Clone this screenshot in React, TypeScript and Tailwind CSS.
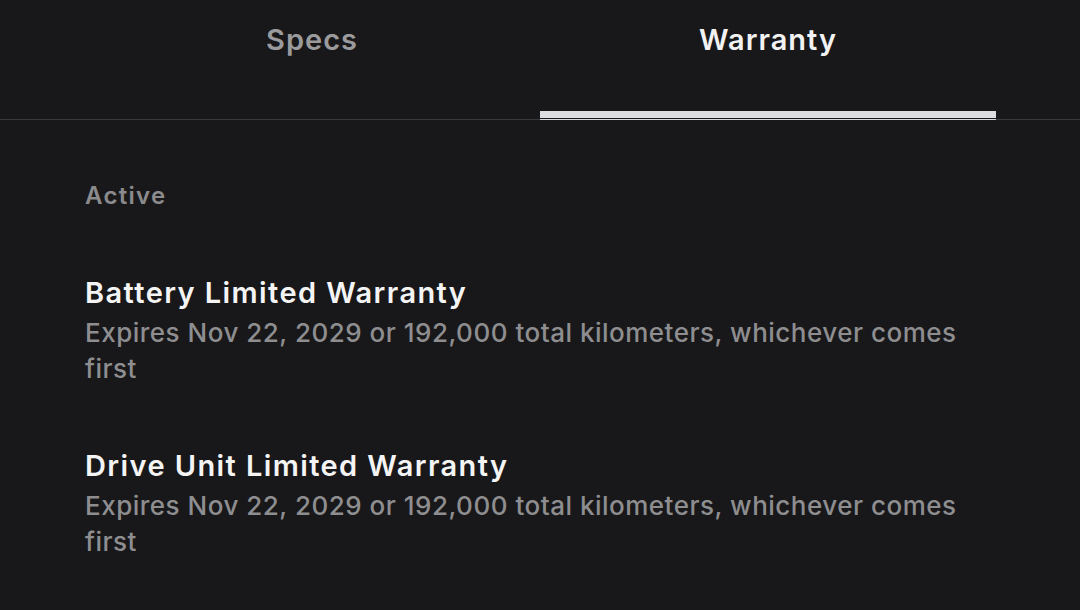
import React from "react";

const items = [
  { title: "Battery Limited Warranty", desc: "Expires Nov 22, 2029 or 192,000 total kilometers, whichever comes first" },
  { title: "Drive Unit Limited Warranty", desc: "Expires Nov 22, 2029 or 192,000 total kilometers, whichever comes first" },
];

export default function App() {
  return (
    <div
      className="w-[1080px] h-[610px] bg-[#18181a] overflow-hidden"
      style={{ fontFamily: "Inter, 'Noto Sans', sans-serif" }}
    >
      <div className="border-b border-[#3a3a3c] px-[84px] flex">
        <div className="w-[456px] h-[119px] flex items-start justify-center pt-[20px]">
          <span className="text-[29px] leading-[40px] font-semibold text-[#9b9b9d] tracking-[1px]">Specs</span>
        </div>
        <div className="w-[456px] h-[120px] -mb-px flex flex-col items-center justify-between pt-[20px] border-b border-[#d8d9dc]">
          <span className="text-[29px] leading-[40px] font-semibold text-[#f2f2f2] tracking-[1px]">Warranty</span>
          <div className="w-full h-[7px] bg-[#dcdde0] mb-px" />
        </div>
      </div>
      <div className="px-[85px] pt-[60px]">
        <div className="text-[24px] leading-[32px] font-semibold text-[#8b8b8d] tracking-[1.3px]">Active</div>
        <div className="mt-[63px] flex flex-col gap-[61px]">
          {items.map((it) => (
            <div key={it.title}>
              <div className="text-[29px] font-semibold text-[#f4f4f4] leading-[36px] tracking-[1.4px]">{it.title}</div>
              <div className="text-[26px] font-medium text-[#8e8e90] leading-[36px] w-[900px] mt-[4px] tracking-[0.5px]">{it.desc}</div>
            </div>
          ))}
        </div>
      </div>
    </div>
  );
}
